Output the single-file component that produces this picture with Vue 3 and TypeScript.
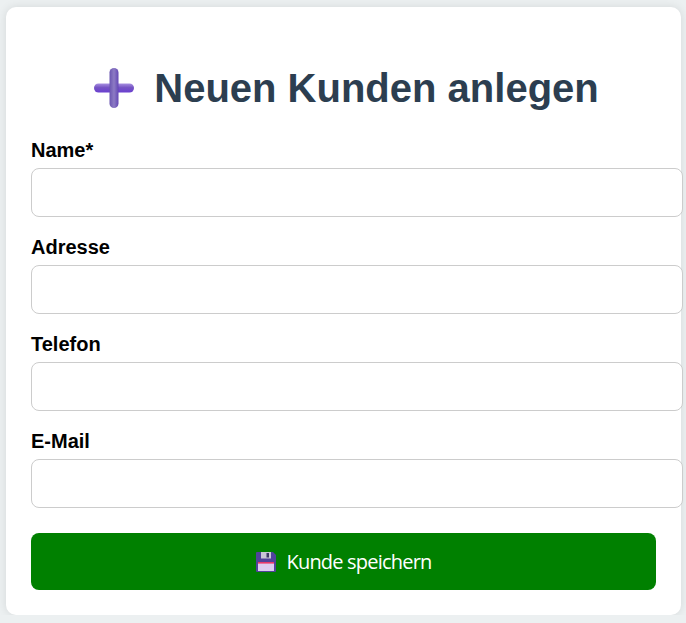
<script setup lang="ts">
interface Field {
  label: string;
  type: string;
}

const fields: Field[] = [
  { label: 'Name*', type: 'text' },
  { label: 'Adresse', type: 'text' },
  { label: 'Telefon', type: 'tel' },
  { label: 'E-Mail', type: 'email' },
];
</script>

<template>
  <main class="card">
    <h1 class="title">
      <svg class="plus" viewBox="0 0 44 42" aria-hidden="true">
        <defs>
          <linearGradient id="plusH" x1="0" y1="0" x2="0" y2="1">
            <stop offset="0" stop-color="#a78fe0" />
            <stop offset="0.45" stop-color="#7654c4" />
            <stop offset="1" stop-color="#6a3fd0" />
          </linearGradient>
          <linearGradient id="plusV" x1="0" y1="0" x2="1" y2="0">
            <stop offset="0" stop-color="#6a55b0" />
            <stop offset="0.5" stop-color="#8d7bc4" />
            <stop offset="1" stop-color="#6347b4" />
          </linearGradient>
        </defs>
        <rect x="4" y="16.5" width="40" height="9" rx="4.5" fill="url(#plusH)" />
        <rect x="19.5" y="1" width="9" height="40" rx="4.5" fill="url(#plusV)" />
      </svg>
      <span>Neuen Kunden anlegen</span>
    </h1>
    <form class="form" @submit.prevent>
      <div v-for="field in fields" :key="field.label" class="field">
        <label>{{ field.label }}</label>
        <input :type="field.type" />
      </div>
      <button type="submit" class="save">
        <svg class="disk" viewBox="0 0 20 20" aria-hidden="true">
          <path d="M0 1a1 1 0 0 1 1-1h16l3 3v16a1 1 0 0 1-1 1H1a1 1 0 0 1-1-1z" fill="#50439a" />
          <rect x="5" y="0" width="10" height="6.5" fill="#c9c6d6" />
          <rect x="10.5" y="1" width="2.5" height="4.5" fill="#3f3a68" />
          <rect x="2" y="10" width="16" height="9" fill="#dccdf0" />
          <rect x="2" y="10" width="16" height="1.6" fill="#e83a6a" />
        </svg>
        <span>Kunde speichern</span>
      </button>
    </form>
  </main>
</template>

<style>
html,
body {
  background: #ecf0f1;
}
</style>

<style scoped>
.card {
  box-sizing: border-box;
  width: 675px;
  height: 608px;
  margin: 7px 0 0 6px;
  padding: 20px 25px 25px;
  background: #fff;
  border-radius: 10px;
  box-shadow: 0 0 10px rgba(0, 0, 0, 0.1);
  font-family: 'Liberation Sans', Arial, sans-serif;
}

.title {
  display: flex;
  align-items: center;
  justify-content: center;
  gap: 20px;
  height: 102px;
  margin: 0 0 10px;
  padding: 20px 0 0 2px;
  box-sizing: border-box;
  font-size: 40px;
  font-weight: 700;
  color: #2c3e50;
}

.plus {
  width: 44px;
  height: 42px;
}

.form {
  display: flex;
  flex-direction: column;
}

.field {
  margin-bottom: 19px;
}

label {
  display: block;
  height: 23px;
  margin-bottom: 6px;
  font-size: 20px;
  line-height: 23px;
  font-weight: 700;
  color: #000;
}

input {
  display: block;
  box-sizing: border-box;
  width: 652px;
  height: 49px;
  padding: 12px;
  border: 1px solid #ccc;
  border-radius: 8px;
  background: #fff;
}

.save {
  display: flex;
  align-items: center;
  justify-content: center;
  gap: 10px;
  height: 57px;
  margin-top: 6px;
  padding: 0 0 0 1px;
  border: 0;
  border-radius: 8px;
  background: #008000;
  color: #fff;
  font-family: 'Open Sans', sans-serif;
  font-size: 20px;
  letter-spacing: -0.8px;
}

.disk {
  width: 20px;
  height: 20px;
}
</style>
